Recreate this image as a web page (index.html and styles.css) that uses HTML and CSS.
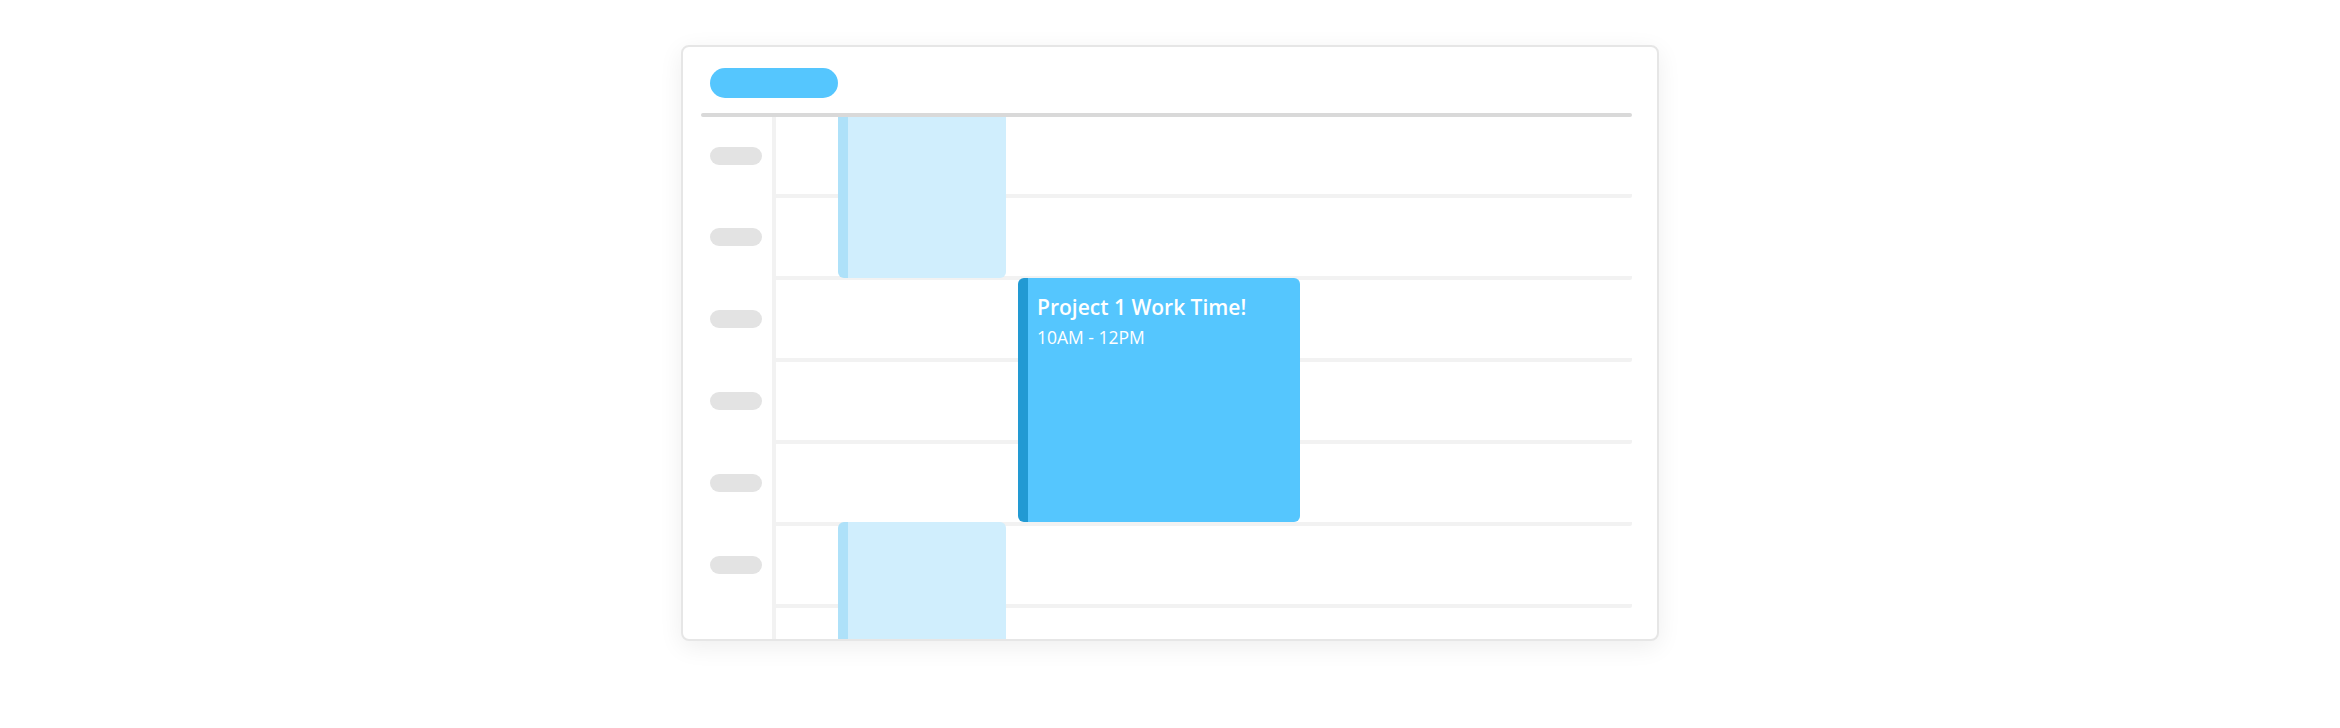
FILE: index.html
```html
<!DOCTYPE html>
<html>
  <head>
    <title>Calendar</title>
    <link rel="stylesheet" href="styles.css">
  </head>
  <body>
    <div class="card">
      <div class="header">
        <div class="title-pill"></div>
      </div>
      <div class="header-line"></div>
      <div class="body">
        <div class="times">
          <div class="time first"><span class="label"></span></div>
          <div class="time"><span class="label"></span></div>
          <div class="time"><span class="label"></span></div>
          <div class="time"><span class="label"></span></div>
          <div class="time"><span class="label"></span></div>
          <div class="time"><span class="label"></span></div>
        </div>
        <div class="grid">
          <div class="slot first"></div>
          <div class="slot"></div>
          <div class="slot"></div>
          <div class="slot"></div>
          <div class="slot"></div>
          <div class="slot"></div>
          <div class="slot"></div>

          <div class="event faded event-top"></div>
          <div class="event active">
            <div class="event-title">Project 1 Work Time!</div>
            <div class="event-time">10AM - 12PM</div>
          </div>
          <div class="event faded event-bottom"></div>
        </div>
      </div>
    </div>
  </body>
</html>
```

FILE: styles.css
```css
body {
  margin: 0;
  padding-top: 45px;
  height: 683px;
  background-color: #fff;
  font-family: "Open Sans", "Liberation Sans", sans-serif;
}

.card {
  width: 974px;
  height: 592px;
  margin: 0 auto;
  border: 2px solid #e6e6e6;
  border-radius: 8px;
  background-color: #fff;
  box-shadow: 0 6px 24px rgba(0, 0, 0, 0.07);
  overflow: hidden;
  display: flex;
  flex-direction: column;
}

.header {
  height: 66px;
  padding-left: 27px;
  box-sizing: border-box;
  padding-top: 21px;
}

.title-pill {
  width: 128px;
  height: 30px;
  border-radius: 15px;
  background-color: #55c6fe;
}

.header-line {
  height: 4px;
  margin: 0 25px 0 18px;
  border-radius: 2px;
  background-color: #d9d9d9;
}

.body {
  flex: 1;
  display: flex;
  overflow: hidden;
}

.times {
  width: 89px;
  flex-shrink: 0;
}

.time {
  height: 82px;
  padding-bottom: 4px;
  box-sizing: border-box;
  display: flex;
  align-items: center;
  padding-left: 27px;
}

.time.first {
  height: 81px;
}

.label {
  width: 52px;
  height: 18px;
  border-radius: 9px;
  background-color: #e3e3e3;
}

.grid {
  flex: 1;
  margin-right: 25px;
  border-left: 4px solid #f2f2f2;
  position: relative;
}

.slot {
  height: 78px;
  border-bottom: 4px solid #f2f2f2;
  border-radius: 0 0 2px 0;
}

.slot.first {
  height: 77px;
}

.event {
  position: absolute;
  box-sizing: border-box;
  border-left: 10px solid;
  border-radius: 6px;
}

.faded {
  left: 62px;
  width: 168px;
  background-color: #d0eefd;
  border-left-color: #aee1f9;
}

.event-top {
  top: 0;
  height: 161px;
  border-radius: 0 0 6px 6px;
}

.event-bottom {
  top: 405px;
  height: 140px;
  border-radius: 6px 6px 0 0;
}

.active {
  left: 242px;
  top: 161px;
  width: 282px;
  height: 244px;
  background-color: #55c6fe;
  border-left-color: #229ad3;
  color: #fff;
  padding: 17px 0 0 9px;
}

.event-title {
  font-size: 21px;
  font-weight: 600;
  line-height: 24px;
}

.event-time {
  font-size: 17.5px;
  margin-top: 8px;
  line-height: 20px;
}
```
